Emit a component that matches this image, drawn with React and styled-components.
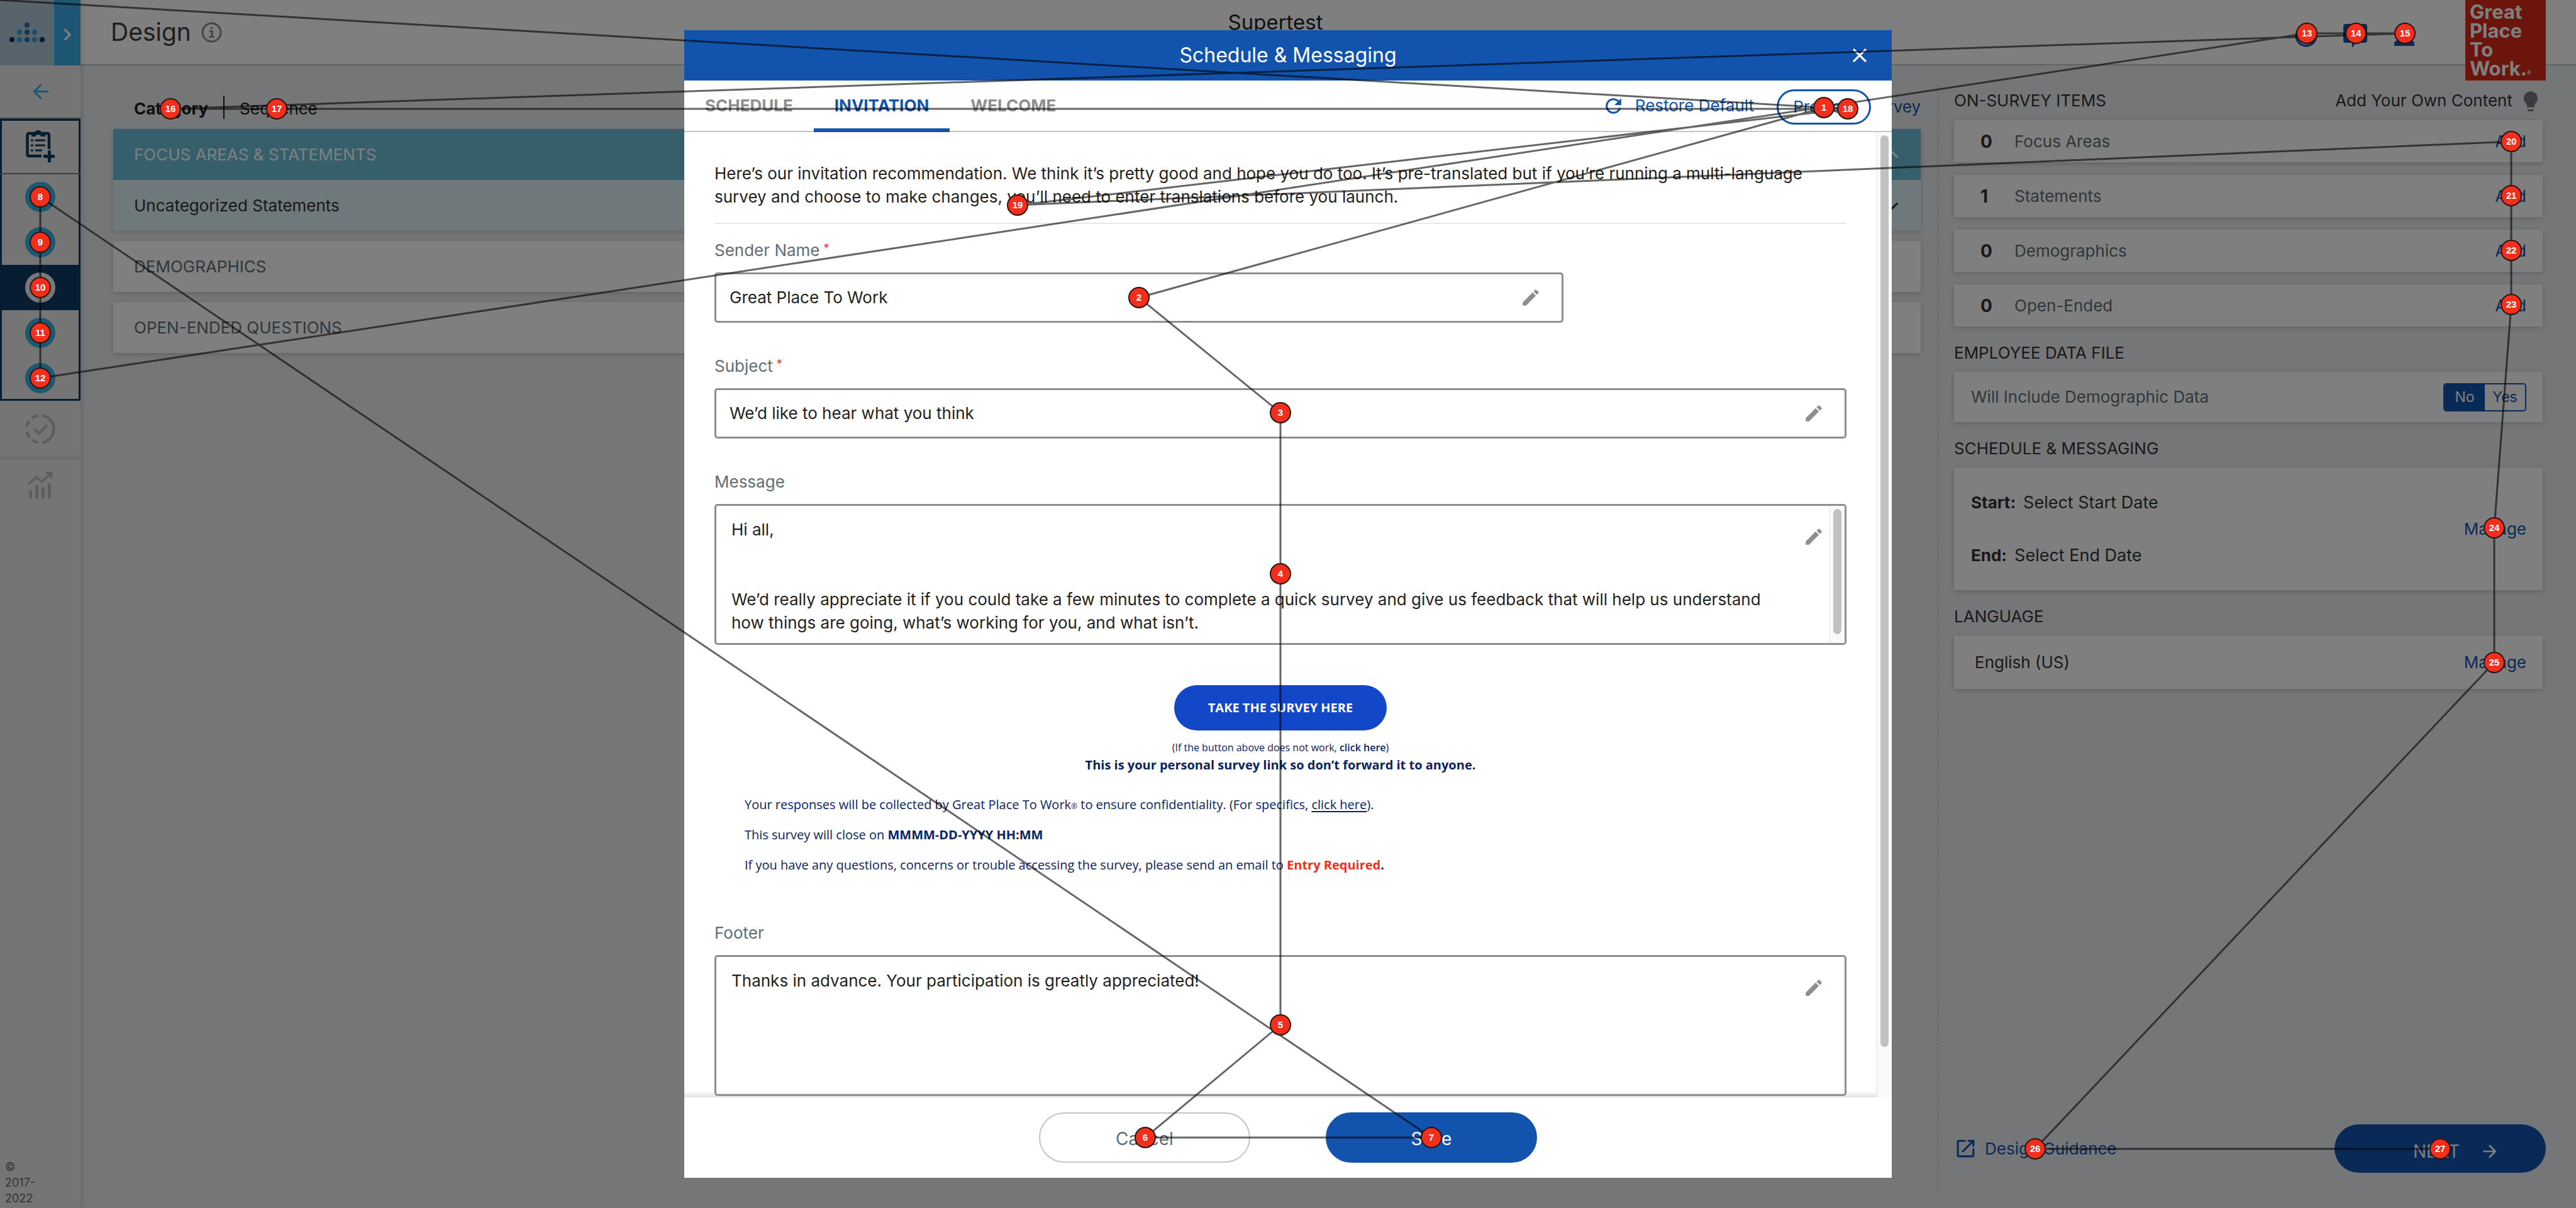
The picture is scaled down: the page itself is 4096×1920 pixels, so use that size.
import React from 'react';
import styled, { createGlobalStyle } from 'styled-components';
import {
  MdArrowBack,
  MdArrowForward,
  MdClose,
  MdEdit,
  MdHelpOutline,
  MdKeyboardArrowDown,
  MdKeyboardArrowRight,
  MdKeyboardArrowUp,
  MdLightbulb,
  MdOpenInNew,
  MdPerson,
  MdRefresh,
} from 'react-icons/md';

const color = {
  blue: '#1254ad',
  navy: '#0e3a62',
  sky: '#3ab0e2',
  ink: '#1f1f1f',
  slate: '#5f6e76',
  line: '#8e8e8e',
  mail: '#0a2463',
  red: '#f22e1d',
};

const GlobalStyle = createGlobalStyle`
  *, *::before, *::after { box-sizing: border-box; }
  body {
    margin: 0;
    background: #ebedf0;
    color: ${color.ink};
    font: 400 26px/36px Inter, "Liberation Sans", sans-serif;
  }
  button, input, textarea { font: inherit; color: inherit; }
  button { border: 0; padding: 0; background: none; cursor: pointer; }
  a { color: inherit; text-decoration: none; }
  h1, h2, h3, p, ul { margin: 0; padding: 0; font-weight: 400; font-size: inherit; }
  ul { list-style: none; }
  svg { display: block; flex: none; }
`;

/* ---------- page frame ---------- */

const Shell = styled.div`
  display: grid;
  grid-template-columns: 128px 1fr;
  min-height: 100vh;
`;

const Sidebar = styled.nav`
  display: flex;
  flex-direction: column;
  background: #ebebeb;
  box-shadow: 2px 0 10px rgba(0, 0, 0, 0.15);
  z-index: 1;
`;

const Brand = styled.div`
  display: flex;
  height: 104px;
`;

const BrandMark = styled.a`
  flex: 1;
  background: #b0c8d6;
`;

const Expander = styled.button`
  display: flex;
  align-items: center;
  justify-content: center;
  width: 42px;
  padding-top: 6px;
  background: #38ace4;
  color: #fff;
`;

const NavItem = styled.button`
  display: flex;
  align-items: center;
  justify-content: center;
  height: ${(p) => p.$height}px;
  border-bottom: ${(p) => p.$rule || '0 solid transparent'};
  color: ${(p) => p.$tone};
`;

const Steps = styled.div`
  display: flex;
  flex-direction: column;
  box-shadow: inset 0 0 0 3px ${color.navy};
`;

const Step = styled.button`
  display: flex;
  align-items: center;
  justify-content: center;
  height: 72px;
  background: ${(p) => (p.$active ? color.navy : 'transparent')};
  &::before {
    content: '';
    width: 48px;
    height: 48px;
    border-radius: 50%;
    background: ${(p) => (p.$active ? '#f0f0f0' : color.sky)};
  }
`;

const Copyright = styled.p`
  width: 64px;
  margin-top: auto;
  padding: 0 0 3px 8px;
  color: ${color.slate};
  && { font-size: 18px; }
  line-height: 25px;
`;

const Page = styled.div`
  display: flex;
  flex-direction: column;
  min-width: 0;
`;

const Header = styled.header`
  display: flex;
  height: 104px;
  background: #fff;
  border-bottom: 2px solid #c4c4c4;
`;

const HeaderMain = styled.div`
  flex: 1;
  display: grid;
  grid-template-columns: 1fr auto 1fr;
  align-items: center;
  padding: 0 40px 0 48px;
`;

const PageTitle = styled.h1`
  display: flex;
  align-items: center;
  gap: 16px;
  color: #3c3c3c;
  && { font-size: 39px; }
`;

const SurveyName = styled.p`
  align-self: start;
  line-height: 70px;
  && { font-size: 33px; }
`;

const HeaderTools = styled.div`
  display: flex;
  justify-content: flex-end;
  gap: 40px;
  padding: 12px 38px 0 0;
  color: ${color.blue};
`;

const ToolButton = styled.button`
  display: flex;
  align-items: center;
  justify-content: center;
  width: 38px;
  height: 38px;
`;

const Logo = styled.p`
  width: 128px;
  height: 128px;
  margin-right: 48px;
  padding: 4px 7px;
  background: #d62a18;
  color: #fff;
  line-height: 30px;
  && { font-size: 31px; font-weight: 700; }
  small { font-size: 10px; font-weight: 400; }
`;

const Body = styled.div`
  flex: 1;
  display: flex;
`;

/* ---------- category list ---------- */

const Main = styled.main`
  flex: 1;
  padding: 48px 27px 0 52px;
`;

const ViewTabs = styled.div`
  display: flex;
  height: 53px;
  padding-left: 33px;
`;

const ViewTab = styled.button`
  height: 42px;
  font-weight: ${(p) => (p.$active ? 700 : 400)};
`;

const TabRule = styled.span`
  width: 2px;
  height: 37px;
  margin: 0 24px;
  background: ${color.ink};
`;

const PreviewSurvey = styled.a`
  margin-left: auto;
  color: ${color.blue};
`;

const Group = styled.section`
  margin-bottom: 16px;
  background: #fff;
  box-shadow: 0 2px 8px rgba(0, 0, 0, 0.18);
`;

const GroupRow = styled.button`
  display: flex;
  align-items: center;
  justify-content: space-between;
  width: 100%;
  height: 81px;
  padding: 0 26px 0 33px;
  text-align: left;
  background: ${(p) => p.$fill || 'transparent'};
  color: ${(p) => p.$tone || color.slate};
`;

/* ---------- right-hand panel ---------- */

const Aside = styled.aside`
  display: flex;
  flex-direction: column;
  flex: 0 0 1015px;
  margin: 32px 0 24px;
  padding: 0 48px 32px 25px;
  border-left: 1px dashed #b4b6ba;
`;

const PanelHeading = styled.h2`
  display: flex;
  justify-content: space-between;
  height: ${(p) => (p.$first ? 55 : 72)}px;
  padding-top: ${(p) => (p.$first ? 6 : 24)}px;
  padding-right: 5px;
  color: #333;
`;

const OwnContent = styled.span`
  display: flex;
  gap: 10px;
  color: #333;
  svg { color: #777; }
`;

const Card = styled.div`
  display: flex;
  align-items: center;
  height: ${(p) => p.$height}px;
  margin: 0 5px ${(p) => p.$gap || 0}px 0;
  padding: 0 26px 0 ${(p) => p.$inset || 27}px;
  background: #fff;
  box-shadow: 0 2px 8px rgba(0, 0, 0, 0.18);
  color: ${(p) => p.$tone || color.slate};
`;

const Count = styled.strong`
  width: 69px;
  padding-left: 15px;
  color: #333;
  font-size: 28px;
`;

const TextLink = styled.a`
  margin-left: auto;
  color: ${color.blue};
`;

const Toggle = styled.div`
  display: flex;
  width: 132px;
  height: 45px;
  margin-left: auto;
  border: 2px solid ${color.blue};
  border-radius: 5px;
  overflow: hidden;
`;

const ToggleSide = styled.button`
  flex: 1;
  background: ${(p) => (p.$on ? color.blue : '#fff')};
  color: ${(p) => (p.$on ? '#fff' : color.blue)};
  font-size: 23px;
`;

const Dates = styled.dl`
  display: grid;
  gap: 48px;
  margin: 0;
  div { display: flex; gap: 12px; }
  dt { font-weight: 700; }
  dd { margin: 0; font-size: 27px; }
`;

const PanelFooter = styled.div`
  display: flex;
  align-items: center;
  justify-content: space-between;
  margin-top: auto;
`;

const Guidance = styled.a`
  display: flex;
  align-items: center;
  gap: 12px;
  color: ${color.blue};
`;

const NextButton = styled.button`
  display: flex;
  align-items: center;
  justify-content: center;
  gap: 32px;
  width: 336px;
  height: 77px;
  padding: 8px 0 0 52px;
  border-radius: 39px;
  background: ${color.blue};
  color: #fff;
  font-size: 28px;
`;

/* ---------- dialog ---------- */

const Scrim = styled.div`
  position: fixed;
  inset: 0;
  z-index: 2;
  display: flex;
  justify-content: center;
  padding: 48px 0;
  background: rgba(0, 0, 0, 0.5);
`;

const Dialog = styled.div`
  display: flex;
  flex-direction: column;
  width: 1920px;
  background: #fff;
`;

const DialogBar = styled.header`
  display: grid;
  grid-template-columns: 1fr auto 1fr;
  align-items: center;
  flex: none;
  height: 80px;
  padding: 0 32px;
  background: ${color.blue};
  color: #fff;
  h2 { grid-column: 2; font-size: 32px; }
  button { justify-self: end; }
`;

const TabBar = styled.div`
  display: flex;
  flex: none;
  height: 82px;
  border-bottom: 2px solid #c4c4c4;
`;

const Tab = styled.button`
  height: 82px;
  padding: 3px 33px 0;
  border-bottom: 6px solid ${(p) => (p.$active ? color.blue : 'transparent')};
  color: ${(p) => (p.$active ? color.blue : color.line)};
  font-weight: 700;
`;

const TabActions = styled.div`
  display: flex;
  align-items: center;
  gap: 36px;
  margin-left: auto;
  padding-right: 33px;
  color: ${color.blue};
`;

const Restore = styled.button`
  display: flex;
  align-items: center;
  gap: 16px;
`;

const PreviewButton = styled.button`
  width: 150px;
  height: 56px;
  margin-top: 4px;
  border: 3px solid ${color.blue};
  border-radius: 28px;
`;

const Scroller = styled.div`
  flex: 1;
  display: flex;
  min-height: 0;
  overflow: hidden;
`;

const Form = styled.form`
  flex: 1;
  display: flex;
  flex-direction: column;
  padding: 47px 48px 0;
  box-shadow: inset 0 -10px 8px -6px rgba(0, 0, 0, 0.14);
`;

const Track = styled.div`
  width: 24px;
  padding: 5px 5px ${(p) => p.$rest}px 5px;
  border-left: 1px solid #e4e4e4;
  background: #fafafa;
  &::before {
    content: '';
    display: block;
    height: 100%;
    border-radius: 7px;
    background: #c1c1c1;
  }
`;

const Intro = styled.p`
  padding-bottom: 23px;
  margin-bottom: 26px;
  border-bottom: 2px solid #e7e7e7;
  line-height: 37px;
`;

const Field = styled.div`
  display: flex;
  flex-direction: column;
  gap: 20px;
  width: ${(p) => p.$width || '100%'};
  margin-bottom: ${(p) => p.$after}px;
  label { color: ${color.slate}; line-height: 31px; }
  sup { margin-left: 6px; color: ${color.red}; font-size: 18px; line-height: 0; vertical-align: 6px; }
`;

const Control = styled.div`
  position: relative;
  display: flex;
  height: ${(p) => p.$height}px;
  border: 3px solid ${color.line};
  border-radius: 5px;
  input, textarea {
    flex: 1;
    min-width: 0;
    border: 0;
    outline: 0;
    background: none;
  }
  input { padding: 0 90px 0 21px; }
  textarea {
    resize: none;
    overflow: hidden;
    padding: 19px ${(p) => (p.$track ? 76 : 100)}px 0 24px;
    line-height: 37px;
  }
`;

const EditButton = styled.button`
  position: absolute;
  top: ${(p) => p.$top}px;
  right: ${(p) => p.$right}px;
  color: ${color.line};
`;

const Mail = styled.div`
  display: flex;
  flex-direction: column;
  align-items: center;
  margin-bottom: 68px;
  color: ${color.mail};
  font: 400 20px/28px "Open Sans", "Noto Sans", sans-serif;
`;

const TakeSurvey = styled.button`
  width: 338px;
  height: 72px;
  margin-bottom: 13px;
  border-radius: 36px;
  background: #1247c8;
  color: #fff;
  font-weight: 700;
`;

const Fallback = styled.p`
  && { font-size: 16px; }
  a { font-weight: 600; }
`;

const MailNotes = styled.div`
  align-self: stretch;
  padding: 25px 48px 0;
  line-height: 48px;
  p { height: 48px; }
  u { text-underline-offset: 3px; }
  small { font-size: 12px; line-height: 0; }
`;

const Required = styled.strong`
  color: ${color.red};
`;

const DialogFooter = styled.footer`
  display: flex;
  align-items: center;
  justify-content: center;
  gap: 120px;
  flex: none;
  height: 128px;
`;

const PillButton = styled.button`
  width: 336px;
  height: 80px;
  padding-top: 4px;
  border: 2px solid ${(p) => (p.$primary ? color.blue : '#c4c4c4')};
  border-radius: 40px;
  background: ${(p) => (p.$primary ? color.blue : '#fff')};
  color: ${(p) => (p.$primary ? '#fff' : color.slate)};
  font-size: 28px;
`;

/* ---------- focus-order overlay ---------- */

const Overlay = styled.div`
  position: fixed;
  inset: 0;
  z-index: 3;
  pointer-events: none;
  svg { width: 100%; height: 100%; }
`;

const Marker = styled.span`
  position: absolute;
  width: 34px;
  height: 34px;
  margin: -17px 0 0 -17px;
  border: 2px solid #2a1512;
  border-radius: 50%;
  background: ${color.red};
  color: #fff;
  font: 700 15px/29px "Liberation Sans", sans-serif;
  text-align: center;
`;

const STOPS = [
  [2900, 171], [1811, 473], [2036, 656], [2036, 912], [2036, 1629], [1821, 1808],
  [2276, 1808], [64, 313], [64, 385], [64, 457], [64, 529], [64, 601], [3668, 53],
  [3746, 53], [3824, 53], [271, 173], [440, 173], [2938, 173], [1618, 326],
  [3993, 225], [3993, 311], [3993, 398], [3993, 484], [3966, 839], [3966, 1053],
  [3236, 1826], [3880, 1826],
];

/* ---------- drawings ---------- */

const DotMark = () => {
  const dots = [
    [43, 40, '#2b6ea8'], [31, 51, '#3a9fd4'], [43, 51, '#2b6ea8'], [55, 51, '#3a9fd4'],
    [19, 63, '#0e3a62'], [31, 63, '#3a9fd4'], [43, 63, '#2b6ea8'], [55, 63, '#3a9fd4'],
    [67, 63, '#0e3a62'],
  ];
  return (
    <svg width="86" height="104" viewBox="0 0 86 104" aria-hidden="true">
      {dots.map(([x, y, fill]) => <circle key={`${x}-${y}`} cx={x} cy={y} r="4.3" fill={fill} />)}
    </svg>
  );
};

const InfoIcon = () => (
  <svg width="33" height="33" viewBox="0 0 33 33" fill="none" stroke="#8a8a8a" strokeWidth="3">
    <circle cx="16.500" cy="16.500" r="14.500" />
    <path d="M13 14.500h4v9M12.500 23.500h8M15 9.500h3" />
  </svg>
);

const ClipboardIcon = () => (
  <svg width="46" height="52" viewBox="0 0 46 52" fill="none" stroke="currentColor">
    <path d="M25 42H5.500Q2.500 42 2.500 39V9Q2.500 6 5.500 6H34Q37 6 37 9V31" strokeWidth="4.500" />
    <path d="M9 5H14Q15 1 19.500 1T25 5H31V11H24Q23 7.500 19.500 7.500T15 11H9Z" fill="currentColor" stroke="none" />
    <path d="M8 17H12M15 17H31M8 25H12M15 25H31M8 33H12M15 33H26" strokeWidth="3" />
    <path d="M37.500 33V52M28 42.500H46" strokeWidth="5" />
  </svg>
);

const ProgressIcon = () => (
  <svg width="48" height="48" viewBox="0 0 48 48" fill="none" stroke="currentColor" strokeWidth="4.500">
    <path d="M27 2.500A21.750 21.750 0 0 1 27 45.500" />
    <path d="M21 45.500A21.750 21.750 0 0 1 11 41.500M7 37.500A21.750 21.750 0 0 1 2.600 28M2.600 20A21.750 21.750 0 0 1 7 10.500M11 6.500A21.750 21.750 0 0 1 21 2.500" />
    <path d="M14.500 23.500L22 31L35 17.500" />
  </svg>
);

const ChartIcon = () => (
  <svg width="40" height="44" viewBox="0 0 40 44">
    <path d="M2 30H7V43H2ZM12 22H17V43H12ZM22 25H27V43H22ZM32 19H37V43H32Z" fill="currentColor" />
    <path d="M1 21L14 9L22 17L35 5" fill="none" stroke="currentColor" strokeWidth="3.500" />
    <path d="M27 1H39V13Z" fill="currentColor" />
  </svg>
);

const ChatIcon = () => (
  <svg width="38" height="38" viewBox="0 0 38 38" fill="currentColor">
    <path d="M4 0H34Q38 0 38 4V26Q38 30 34 30H20L14 38V30H4Q0 30 0 26V4Q0 0 4 0Z" />
    <path d="M17 6H21V17H17ZM17 20H21V24H17Z" fill="#fff" />
  </svg>
);

const EditField = ({ top, right, name }) => (
  <EditButton type="button" $top={top} $right={right} aria-label={`Edit ${name}`}>
    <MdEdit size={34} />
  </EditButton>
);

const ITEMS = [
  ['0', 'Focus Areas'],
  ['1', 'Statements'],
  ['0', 'Demographics'],
  ['0', 'Open-Ended'],
];

const MESSAGE =
  'Hi all,\n\n\nWe’d really appreciate it if you could take a few minutes to complete a quick survey and give us feedback that will help us understand how things are going, what’s working for you, and what isn’t.';

export default function App() {
  return (
    <>
      <GlobalStyle />
      <Shell>
        <Sidebar>
          <Brand>
            <BrandMark href="#home" aria-label="Home"><DotMark /></BrandMark>
            <Expander aria-label="Expand menu"><MdKeyboardArrowRight size={38} /></Expander>
          </Brand>
          <NavItem $height={85} $rule="2px solid #7a7a7a" $tone={color.sky} aria-label="Back">
            <MdArrowBack size={37} />
          </NavItem>
          <Steps>
            <NavItem $height={88} $rule="2px solid #7a7a7a" $tone={color.navy} aria-label="Design">
              <ClipboardIcon />
            </NavItem>
            {[1, 2, 3, 4, 5].map((n) => (
              <Step key={n} $active={n === 3} aria-label={`Step ${n}`} />
            ))}
          </Steps>
          <NavItem $height={92} $rule="3px solid #d8d8d8" $tone="#bcbcbc" aria-label="Progress">
            <ProgressIcon />
          </NavItem>
          <NavItem $height={83} $tone="#bcbcbc" aria-label="Results">
            <ChartIcon />
          </NavItem>
          <Copyright>© 2017-2022</Copyright>
        </Sidebar>

        <Page>
          <Header>
            <HeaderMain>
              <PageTitle>Design <InfoIcon /></PageTitle>
              <SurveyName>Supertest</SurveyName>
              <HeaderTools>
                <ToolButton aria-label="Help"><MdHelpOutline size={42} /></ToolButton>
                <ToolButton aria-label="Feedback"><ChatIcon /></ToolButton>
                <ToolButton aria-label="Account"><MdPerson size={48} /></ToolButton>
              </HeaderTools>
            </HeaderMain>
            <Logo>Great<br />Place<br />To<br />Work.<small>®</small></Logo>
          </Header>

          <Body>
            <Main>
              <ViewTabs>
                <ViewTab $active>Category</ViewTab>
                <TabRule />
                <ViewTab>Sequence</ViewTab>
                <PreviewSurvey href="#preview">Preview Survey</PreviewSurvey>
              </ViewTabs>
              <Group>
                <GroupRow $fill="#6cbed8" $tone="#fff">
                  FOCUS AREAS &amp; STATEMENTS <MdKeyboardArrowUp size={38} />
                </GroupRow>
                <GroupRow $fill="#def2f7" $tone="#333">
                  Uncategorized Statements <MdKeyboardArrowDown size={38} />
                </GroupRow>
              </Group>
              <Group><GroupRow>DEMOGRAPHICS</GroupRow></Group>
              <Group><GroupRow>OPEN-ENDED QUESTIONS</GroupRow></Group>
            </Main>

            <Aside>
              <PanelHeading $first>
                ON-SURVEY ITEMS
                <OwnContent>Add Your Own Content <MdLightbulb size={38} /></OwnContent>
              </PanelHeading>
              {ITEMS.map(([count, name], i) => (
                <Card key={name} $height={67} $gap={i < 3 ? 20 : 0}>
                  <Count>{count}</Count>
                  <span>{name}</span>
                  <TextLink href="#add">Add</TextLink>
                </Card>
              ))}
              <PanelHeading>EMPLOYEE DATA FILE</PanelHeading>
              <Card $height={80}>
                Will Include Demographic Data
                <Toggle>
                  <ToggleSide $on>No</ToggleSide>
                  <ToggleSide>Yes</ToggleSide>
                </Toggle>
              </Card>
              <PanelHeading>SCHEDULE &amp; MESSAGING</PanelHeading>
              <Card $height={195} $tone="#333">
                <Dates>
                  <div><dt>Start:</dt><dd>Select Start Date</dd></div>
                  <div><dt>End:</dt><dd>Select End Date</dd></div>
                </Dates>
                <TextLink href="#schedule">Manage</TextLink>
              </Card>
              <PanelHeading>LANGUAGE</PanelHeading>
              <Card $height={85} $inset={33} $tone="#333">
                English (US)
                <TextLink href="#language">Manage</TextLink>
              </Card>
              <PanelFooter>
                <Guidance href="#guidance"><MdOpenInNew size={37} />Design Guidance</Guidance>
                <NextButton>NEXT <MdArrowForward size={32} /></NextButton>
              </PanelFooter>
            </Aside>
          </Body>
        </Page>
      </Shell>

      <Scrim>
        <Dialog role="dialog" aria-labelledby="dialog-title">
          <DialogBar>
            <h2 id="dialog-title">Schedule &amp; Messaging</h2>
            <button aria-label="Close"><MdClose size={38} /></button>
          </DialogBar>
          <TabBar>
            <Tab>SCHEDULE</Tab>
            <Tab $active>INVITATION</Tab>
            <Tab>WELCOME</Tab>
            <TabActions>
              <Restore><MdRefresh size={37} />Restore Default</Restore>
              <PreviewButton>Preview</PreviewButton>
            </TabActions>
          </TabBar>

          <Scroller>
            <Form>
              <Intro>
                Here’s our invitation recommendation. We think it’s pretty good and hope you do too. It’s
                pre-translated but if you’re running a multi-language survey and choose to make changes,
                you’ll need to enter translations before you launch.
              </Intro>
              <Field $width="75%" $after={53}>
                <label htmlFor="sender">Sender Name<sup>*</sup></label>
                <Control $height={80}>
                  <input id="sender" defaultValue="Great Place To Work" />
                  <EditField top={20} right={32} name="sender name" />
                </Control>
              </Field>
              <Field $after={53}>
                <label htmlFor="subject">Subject<sup>*</sup></label>
                <Control $height={80}>
                  <input id="subject" defaultValue="We’d like to hear what you think" />
                  <EditField top={20} right={32} name="subject" />
                </Control>
              </Field>
              <Field $after={64}>
                <label htmlFor="message">Message</label>
                <Control $height={224} $track>
                  <textarea id="message" defaultValue={MESSAGE} />
                  <Track $rest={14} />
                  <EditField top={32} right={32} name="message" />
                </Control>
              </Field>

              <Mail>
                <TakeSurvey type="button">TAKE THE SURVEY HERE</TakeSurvey>
                <Fallback>(If the button above does not work, <a href="#survey">click here</a>)</Fallback>
                <strong>This is your personal survey link so don’t forward it to anyone.</strong>
                <MailNotes>
                  <p>
                    Your responses will be collected by Great Place To Work<small>®</small> to ensure
                    confidentiality. (For specifics, <a href="#privacy"><u>click here</u></a>).
                  </p>
                  <p>This survey will close on <strong>MMMM-DD-YYYY HH:MM</strong></p>
                  <p>
                    If you have any questions, concerns or trouble accessing the survey, please send an
                    email to <Required>Entry Required</Required><strong>.</strong>
                  </p>
                </MailNotes>
              </Mail>

              <Field $after={0}>
                <label htmlFor="footer">Footer</label>
                <Control $height={224}>
                  <textarea
                    id="footer"
                    defaultValue="Thanks in advance. Your participation is greatly appreciated!"
                  />
                  <EditField top={32} right={32} name="footer" />
                </Control>
              </Field>
            </Form>
            <Track $rest={80} />
          </Scroller>

          <DialogFooter>
            <PillButton>Cancel</PillButton>
            <PillButton $primary>Save</PillButton>
          </DialogFooter>
        </Dialog>
      </Scrim>

      <Overlay>
        <svg viewBox="0 0 4096 1920" preserveAspectRatio="none" aria-hidden="true">
          <polyline
            points={[[0, 0], ...STOPS].map((p) => p.join(',')).join(' ')}
            fill="none"
            stroke="rgba(0,0,0,0.6)"
            strokeWidth="3"
          />
        </svg>
        {STOPS.map(([x, y], i) => (
          <Marker key={i} style={{ left: `${(x / 4096) * 100}%`, top: `${(y / 1920) * 100}%` }}>
            {i + 1}
          </Marker>
        ))}
      </Overlay>
    </>
  );
}
